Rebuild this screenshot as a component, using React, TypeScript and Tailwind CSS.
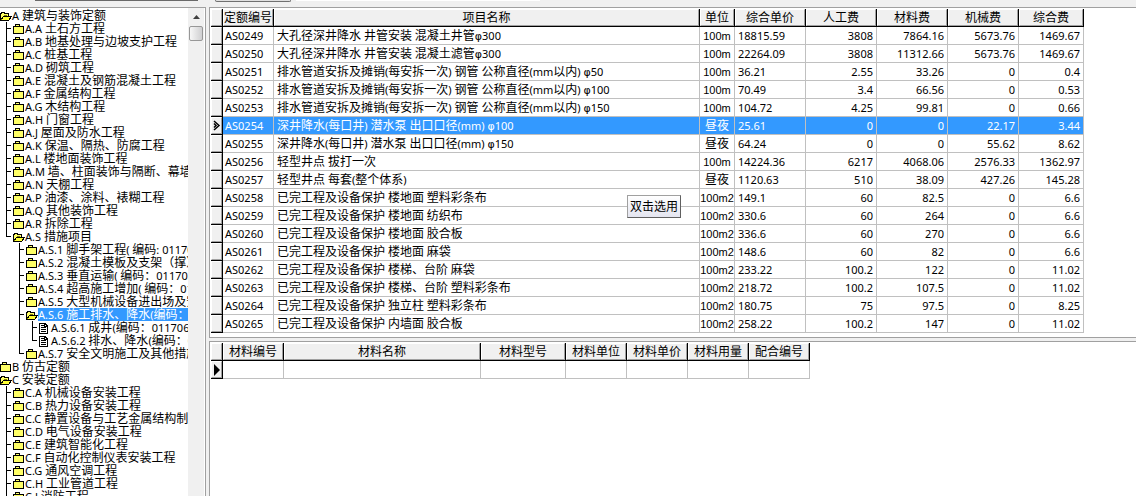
type TreeRow = {
  // one character per indent step: "|" line, "+" branch, "L" last branch, " " blank
  guides: string;
  icon: 'closed' | 'open' | 'doc';
  label: string;
  selected?: boolean;
};

const TREE: TreeRow[] = [
  { guides: '', icon: 'open', label: 'A 建筑与装饰定额' },
  { guides: '+', icon: 'closed', label: 'A.A 土石方工程' },
  { guides: '+', icon: 'closed', label: 'A.B 地基处理与边坡支护工程' },
  { guides: '+', icon: 'closed', label: 'A.C 桩基工程' },
  { guides: '+', icon: 'closed', label: 'A.D 砌筑工程' },
  { guides: '+', icon: 'closed', label: 'A.E 混凝土及钢筋混凝土工程' },
  { guides: '+', icon: 'closed', label: 'A.F 金属结构工程' },
  { guides: '+', icon: 'closed', label: 'A.G 木结构工程' },
  { guides: '+', icon: 'closed', label: 'A.H 门窗工程' },
  { guides: '+', icon: 'closed', label: 'A.J 屋面及防水工程' },
  { guides: '+', icon: 'closed', label: 'A.K 保温、隔热、防腐工程' },
  { guides: '+', icon: 'closed', label: 'A.L 楼地面装饰工程' },
  { guides: '+', icon: 'closed', label: 'A.M 墙、柱面装饰与隔断、幕墙工程' },
  { guides: '+', icon: 'closed', label: 'A.N 天棚工程' },
  { guides: '+', icon: 'closed', label: 'A.P 油漆、涂料、裱糊工程' },
  { guides: '+', icon: 'closed', label: 'A.Q 其他装饰工程' },
  { guides: '+', icon: 'closed', label: 'A.R 拆除工程' },
  { guides: 'L', icon: 'open', label: 'A.S 措施项目' },
  { guides: ' +', icon: 'closed', label: 'A.S.1 脚手架工程( 编码: 011701)' },
  { guides: ' +', icon: 'closed', label: 'A.S.2 混凝土模板及支架（撑）' },
  { guides: ' +', icon: 'closed', label: 'A.S.3 垂直运输( 编码：011703)' },
  { guides: ' +', icon: 'closed', label: 'A.S.4 超高施工增加( 编码：011704)' },
  { guides: ' +', icon: 'closed', label: 'A.S.5 大型机械设备进出场及安拆' },
  { guides: ' +', icon: 'open', label: 'A.S.6 施工排水、降水(编码：011706)', selected: true },
  { guides: ' |+', icon: 'doc', label: 'A.S.6.1 成井(编码：011706001)' },
  { guides: ' |L', icon: 'doc', label: 'A.S.6.2 排水、降水(编码：011706002)' },
  { guides: ' L', icon: 'closed', label: 'A.S.7 安全文明施工及其他措施项目' },
  { guides: '', icon: 'closed', label: 'B 仿古定额' },
  { guides: '', icon: 'open', label: 'C 安装定额' },
  { guides: '+', icon: 'closed', label: 'C.A 机械设备安装工程' },
  { guides: '+', icon: 'closed', label: 'C.B 热力设备安装工程' },
  { guides: '+', icon: 'closed', label: 'C.C 静置设备与工艺金属结构制作' },
  { guides: '+', icon: 'closed', label: 'C.D 电气设备安装工程' },
  { guides: '+', icon: 'closed', label: 'C.E 建筑智能化工程' },
  { guides: '+', icon: 'closed', label: 'C.F 自动化控制仪表安装工程' },
  { guides: '+', icon: 'closed', label: 'C.G 通风空调工程' },
  { guides: '+', icon: 'closed', label: 'C.H 工业管道工程' },
  { guides: '+', icon: 'closed', label: 'C.J 消防工程' },
];

type Column = { title: string; width: string; cell?: string };

const QUOTA_COLUMNS: Column[] = [
  { title: '定额编号', width: 'w-[51px]', cell: 'px-[2px] text-left' },
  { title: '项目名称', width: 'w-[426px]', cell: 'px-[3px] text-left' },
  { title: '单位', width: 'w-[35px]', cell: "px-0 text-center [&_span]:font-['Liberation_Sans','Noto_Sans_CJK_SC',sans-serif]" },
  { title: '综合单价', width: 'w-[71px]', cell: 'px-[3px] text-left' },
  { title: '人工费', width: 'w-[71px]', cell: 'px-[3px] text-right' },
  { title: '材料费', width: 'w-[71px]', cell: 'px-[3px] text-right' },
  { title: '机械费', width: 'w-[71px]', cell: 'px-[3px] text-right' },
  { title: '综合费', width: 'w-[65px]', cell: 'px-[3px] text-right' },
];

const QUOTAS: string[][] = [
  ['AS0249', '大孔径深井降水 井管安装 混凝土井管φ300', '100m', '18815.59', '3808', '7864.16', '5673.76', '1469.67'],
  ['AS0250', '大孔径深井降水 井管安装 混凝土滤管φ300', '100m', '22264.09', '3808', '11312.66', '5673.76', '1469.67'],
  ['AS0251', '排水管道安拆及摊销(每安拆一次) 钢管 公称直径(mm以内) φ50', '100m', '36.21', '2.55', '33.26', '0', '0.4'],
  ['AS0252', '排水管道安拆及摊销(每安拆一次) 钢管 公称直径(mm以内) φ100', '100m', '70.49', '3.4', '66.56', '0', '0.53'],
  ['AS0253', '排水管道安拆及摊销(每安拆一次) 钢管 公称直径(mm以内) φ150', '100m', '104.72', '4.25', '99.81', '0', '0.66'],
  ['AS0254', '深井降水(每口井) 潜水泵 出口口径(mm) φ100', '昼夜', '25.61', '0', '0', '22.17', '3.44'],
  ['AS0255', '深井降水(每口井) 潜水泵 出口口径(mm) φ150', '昼夜', '64.24', '0', '0', '55.62', '8.62'],
  ['AS0256', '轻型井点 拔打一次', '100m', '14224.36', '6217', '4068.06', '2576.33', '1362.97'],
  ['AS0257', '轻型井点 每套(整个体系)', '昼夜', '1120.63', '510', '38.09', '427.26', '145.28'],
  ['AS0258', '已完工程及设备保护 楼地面 塑料彩条布', '100m2', '149.1', '60', '82.5', '0', '6.6'],
  ['AS0259', '已完工程及设备保护 楼地面 纺织布', '100m2', '330.6', '60', '264', '0', '6.6'],
  ['AS0260', '已完工程及设备保护 楼地面 胶合板', '100m2', '336.6', '60', '270', '0', '6.6'],
  ['AS0261', '已完工程及设备保护 楼地面 麻袋', '100m2', '148.6', '60', '82', '0', '6.6'],
  ['AS0262', '已完工程及设备保护 楼梯、台阶 麻袋', '100m2', '233.22', '100.2', '122', '0', '11.02'],
  ['AS0263', '已完工程及设备保护 楼梯、台阶 塑料彩条布', '100m2', '218.72', '100.2', '107.5', '0', '11.02'],
  ['AS0264', '已完工程及设备保护 独立柱 塑料彩条布', '100m2', '180.75', '75', '97.5', '0', '8.25'],
  ['AS0265', '已完工程及设备保护 内墙面 胶合板', '100m2', '258.22', '100.2', '147', '0', '11.02'],
];

const MATERIAL_COLUMNS: Column[] = [
  { title: '材料编号', width: 'w-[61px]' },
  { title: '材料名称', width: 'w-[197px]' },
  { title: '材料型号', width: 'w-[85px]' },
  { title: '材料单位', width: 'w-[61px]' },
  { title: '材料单价', width: 'w-[61px]' },
  { title: '材料用量', width: 'w-[61px]' },
  { title: '配合编号', width: 'w-[61px]' },
];

const MATERIALS: string[][] = [['', '', '', '', '', '', '']];

function runClass(run: string) {
  if (run === 'φ') return "font-['DejaVu_Sans',sans-serif] text-[11px] leading-none";
  return /^[\u0020-\u02ff]/.test(run) ? 'whitespace-pre text-[11px] leading-none' : 'text-[12px] leading-none';
}

// Latin runs are set one size smaller than the Chinese around them
function Mixed({ text }: { text: string }) {
  const runs = text.match(/φ|[\u0020-\u02ff]+|[^\u0020-\u02ffφ]+/g) ?? [];
  return (
    <>
      {runs.map((run, i) => (
        <span key={i} className={runClass(run)}>
          {run}
        </span>
      ))}
    </>
  );
}

const GUIDE_PATHS: Record<string, string> = {
  '|': 'M6.5 0V13',
  '+': 'M6.5 0V13M6 6.5H11',
  L: 'M6.5 0V7M6 6.5H11',
  ' ': '',
};

function Guide({ kind }: { kind: string }) {
  return (
    <svg width="13" height="13" className="shrink-0" shapeRendering="crispEdges" aria-hidden="true">
      <path d={GUIDE_PATHS[kind]} stroke="#000" fill="none" />
    </svg>
  );
}

function NodeIcon({ icon }: { icon: TreeRow['icon'] }) {
  return (
    <svg
      width="12"
      height="13"
      viewBox="0 -1 12 13"
      className="shrink-0"
      shapeRendering="crispEdges"
      aria-hidden="true"
    >
      {icon === 'doc' && (
        <>
          <path d="M0.5 1.5H6.5V2.5H7.5V3.5H8.5V11.5H0.5Z" fill="#fff" stroke="#000" />
          <path d="M2 3.5H5M2 5.5H7M2 7.5H7M2 9.5H7M5.5 2V4.5H8" stroke="#000" fill="none" />
        </>
      )}
      {icon === 'open' && (
        <>
          <path d="M0.5 9.5V3.5H1.5V2.5H4.5V3.5H8.5V6.5" fill="#ffff66" stroke="#000" />
          <path d="M0.5 10.5L3.5 6.5H11.5L8.5 10.5Z" fill="#ffff33" stroke="#000" />
          <path d="M4 5.5H7M1 9.5H2" stroke="#808000" />
        </>
      )}
      {icon === 'closed' && (
        <>
          <path d="M0.5 10.5V3.5H2.5V1.5H6.5V3.5H10.5V10.5Z" fill="#ffff66" stroke="#000" />
          <path d="M3 3.5H6" stroke="#000" />
        </>
      )}
    </svg>
  );
}

function ScrollBar() {
  return (
    <div className="mr-px flex w-4 shrink-0 flex-col items-center bg-[#f0f0f0]">
      <svg width="16" height="18" aria-hidden="true">
        <path d="M5 11L8.5 7L12 11Z" fill="#404040" />
      </svg>
      <div className="h-[15px] w-[14px] rounded-[2px] border border-[#979797] bg-linear-to-r from-[#f7f7f7] to-[#cfcfd1]" />
    </div>
  );
}

function QuotaTree() {
  return (
    <aside className="flex w-[206px] shrink-0 border-t border-r border-[#a0a0a0] bg-white">
      <ul role="tree" className="min-w-0 flex-1 overflow-hidden pt-px">
        {TREE.map((row) => (
          <li key={row.label} role="treeitem" aria-selected={!!row.selected} className="flex h-[13px] leading-[13px]">
            {[...row.guides].map((kind, i) => (
              <Guide key={i} kind={kind} />
            ))}
            <NodeIcon icon={row.icon} />
            <span className={`h-[13px] flex-1 whitespace-nowrap ${row.selected ? 'bg-[#3399ff] text-white' : ''}`}>
              <Mixed text={row.label} />
            </span>
          </li>
        ))}
      </ul>
      <ScrollBar />
    </aside>
  );
}

const BEVEL = 'flex h-[17px] items-center justify-center border border-t-white border-l-white border-r-[#a0a0a0] border-b-[#a0a0a0] bg-[#f0f0f0]';

type GridProps = {
  columns: Column[];
  rows: string[][];
  current: number;
  marker: React.ReactNode;
  highlight?: boolean;
};

function Grid({ columns, rows, current, marker, highlight }: GridProps) {
  return (
    <table className="w-0 table-fixed border-separate border-spacing-0 whitespace-nowrap">
      <colgroup>
        <col className="w-[12px]" />
        {columns.map((col) => (
          <col key={col.title} className={col.width} />
        ))}
      </colgroup>
      <thead>
        <tr>
          <th className="border-r border-b border-black p-0">
            <div className={BEVEL} />
          </th>
          {columns.map((col) => (
            <th key={col.title} className="border-r border-b border-black p-0 text-[12px] leading-[15px] font-normal">
              <div className={BEVEL}>{col.title}</div>
            </th>
          ))}
        </tr>
      </thead>
      <tbody>
        {rows.map((cells, r) => (
          <tr key={r} className={highlight && r === current ? 'bg-[#3399ff] text-white' : ''}>
            <td className="border-r border-b border-black p-0">
              <div className={BEVEL}>{r === current && marker}</div>
            </td>
            {cells.map((cell, c) => (
              <td
                key={c}
                className={`border-r border-b border-[#c0c0c0] py-0 ${columns[c].cell ?? ''}`}
              >
                <div className="h-[17px] leading-[17px]">
                  <Mixed text={cell} />
                </div>
              </td>
            ))}
          </tr>
        ))}
      </tbody>
    </table>
  );
}

function Toolbar() {
  return (
    <div className="flex h-[7px] shrink-0 items-start">
      <div className="ml-[35px] h-px w-[163px] bg-[#696969]" />
      <div className="ml-[17px] h-[2px] w-[76px] rounded-b-sm border-x border-b border-[#707070] bg-[#e0e0e0]" />
      <div className="ml-[5px] h-px w-[244px] bg-white" />
    </div>
  );
}

export default function App() {
  return (
    <div className="flex h-screen flex-col overflow-hidden bg-[#f0f0f0] font-['Noto_Sans','Noto_Sans_CJK_SC',sans-serif] text-[12px] text-black">
      <Toolbar />
      <div className="flex min-h-0 flex-1">
        <QuotaTree />
        <main className="ml-[3px] flex min-w-0 flex-1 flex-col gap-[3px]">
          <section className="relative shrink-0 overflow-hidden border border-r-0 border-[#a0a0a0] bg-white pt-px pb-1 pl-px">
            <Grid
              columns={QUOTA_COLUMNS}
              rows={QUOTAS}
              current={5}
              highlight
              marker={
                <svg width="8" height="11" aria-hidden="true">
                  <path d="M1 1L6 5.5L1 10M1 3.5L3 5.5L1 7.5" stroke="#000" strokeWidth="1.5" fill="none" />
                </svg>
              }
            />
            <div
              role="tooltip"
              className="absolute top-[187px] left-[417px] border border-t-[#a0a0a0] border-r-[#606060] border-b-[#606060] border-l-[#a0a0a0] bg-linear-to-b from-white to-[#e4e5f0] px-[2px] py-[2px] leading-[17px]"
            >
              双击选用
            </div>
          </section>
          <section className="min-h-0 flex-1 overflow-hidden border-t border-l border-[#a0a0a0] bg-white pt-px pl-px">
            <Grid
              columns={MATERIAL_COLUMNS}
              rows={MATERIALS}
              current={0}
              marker={
                <svg width="7" height="12" aria-hidden="true">
                  <path d="M1 0V12L7 6Z" fill="#000" />
                </svg>
              }
            />
          </section>
        </main>
      </div>
    </div>
  );
}
